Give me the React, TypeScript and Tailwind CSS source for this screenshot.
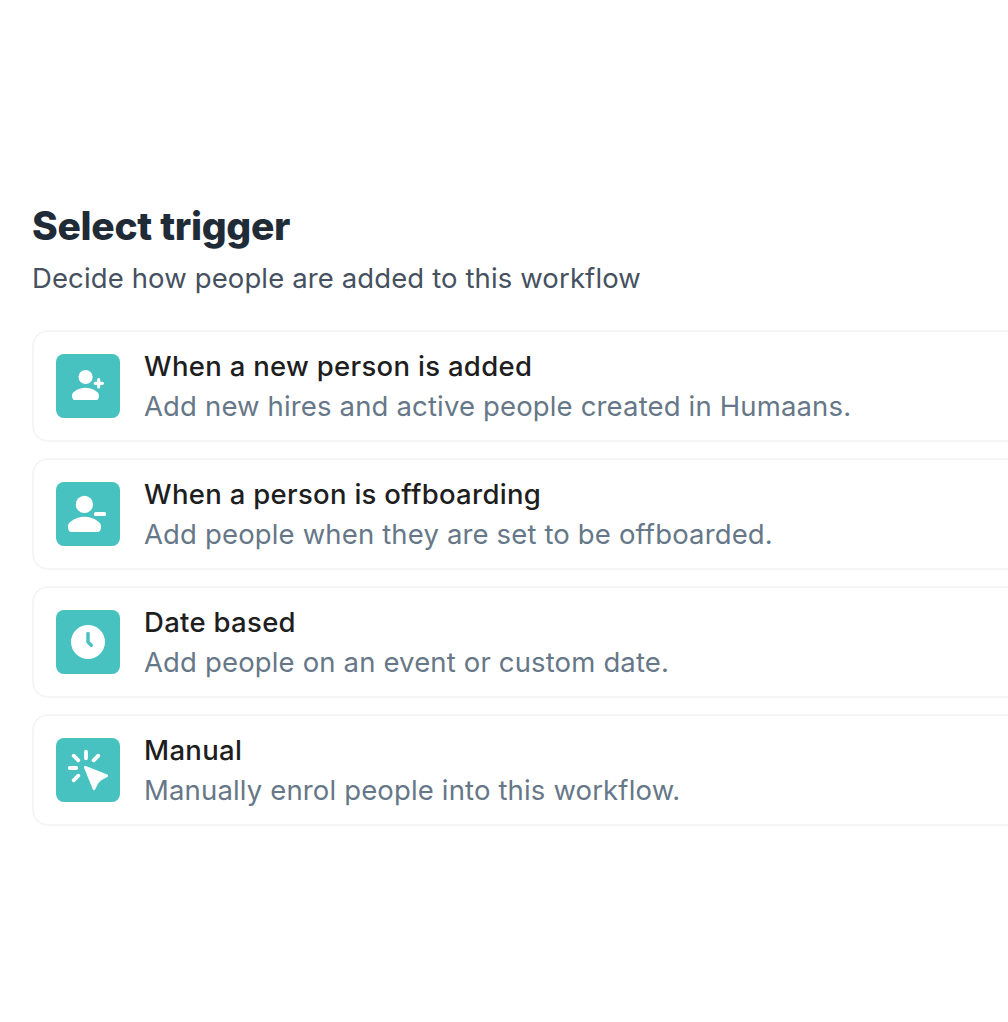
import type {ReactNode} from "react";

type Trigger = {
  title: string;
  description: string;
  icon: ReactNode;
};

const triggers: Trigger[] = [
  {
    title: "When a new person is added",
    description: "Add new hires and active people created in Humaans.",
    icon: (
      <>
        <circle cx="29.6" cy="23" r="7.1" fill="white" />
        <path d="M16 41.5C16 39.5 17 38.5 18.5 37.5C25 32.6 34 32.6 40.5 37.5C42 38.5 43 39.5 43 41.5C43 44 42 46 40.5 46H18.5C17 46 16 44 16 41.5Z" fill="white" />
        <path d="M42.7 25.7V33M39.2 29.3H46.4" stroke="white" strokeWidth="3.2" strokeLinecap="round" />
      </>
    ),
  },
  {
    title: "When a person is offboarding",
    description: "Add people when they are set to be offboarded.",
    icon: (
      <>
        <circle cx="28.4" cy="22.4" r="8.6" fill="white" />
        <path d="M12 44.5C12 42 13 40.8 15 39.5C23 33.3 34 33.3 42 39.5C44 40.8 45 42 45 44.5C45 47.5 44 50 42 50H15C13 50 12 47.5 12 44.5Z" fill="white" />
        <rect x="38" y="30" width="12" height="4" rx="1.5" fill="white" />
      </>
    ),
  },
  {
    title: "Date based",
    description: "Add people on an event or custom date.",
    icon: (
      <>
        <circle cx="32" cy="32" r="17" fill="white" />
        <path d="M32 23.5V32L35.3 35.3" fill="none" stroke="#48c1c1" strokeWidth="3.4" strokeLinecap="round" strokeLinejoin="round" />
      </>
    ),
  },
  {
    title: "Manual",
    description: "Manually enrol people into this workflow.",
    icon: (
      <>
        <path d="M30 13.7V20.3M17.7 17.7L22.3 22.3M42.3 17.7L37.7 22.3M13.7 30H20.3M17.7 42.3L22.3 37.7" stroke="white" strokeWidth="3.8" strokeLinecap="round" />
        <path d="M29.3 29.2L50.8 37.8L45.5 40.5Q42.5 42 41 45L38 50.8Z" fill="white" stroke="white" strokeWidth="2.6" strokeLinejoin="round" />
      </>
    ),
  },
];

export default function App() {
  return (
    <div className="h-[1022px] overflow-hidden bg-white pt-[203px] pl-8 font-['Inter',sans-serif]">
      <h1 className="text-[39px] leading-[46px] font-extrabold tracking-[-0.3px] text-[#1f2b36]">Select trigger</h1>
      <p className="mt-[9px] text-[27.5px] leading-10 tracking-[0.12px] text-[#46515f]">
        Decide how people are added to this workflow
      </p>
      <div className="mt-8 flex flex-col gap-4">
        {triggers.map((trigger) => (
          <div
            key={trigger.title}
            className="flex h-28 items-center gap-6 rounded-l-2xl border-2 border-r-0 border-[#f5f5f5] pl-[22px]"
          >
            <svg className="size-16 shrink-0 rounded-lg bg-[#48c1c1]" viewBox="0 0 64 64">
              {trigger.icon}
            </svg>
            <div className="text-[27.5px] leading-10 whitespace-nowrap">
              <div className="font-medium tracking-[0.3px] text-[#1e1e1f]">{trigger.title}</div>
              <div className="tracking-[0.15px] text-[#667788]">{trigger.description}</div>
            </div>
          </div>
        ))}
      </div>
    </div>
  );
}
